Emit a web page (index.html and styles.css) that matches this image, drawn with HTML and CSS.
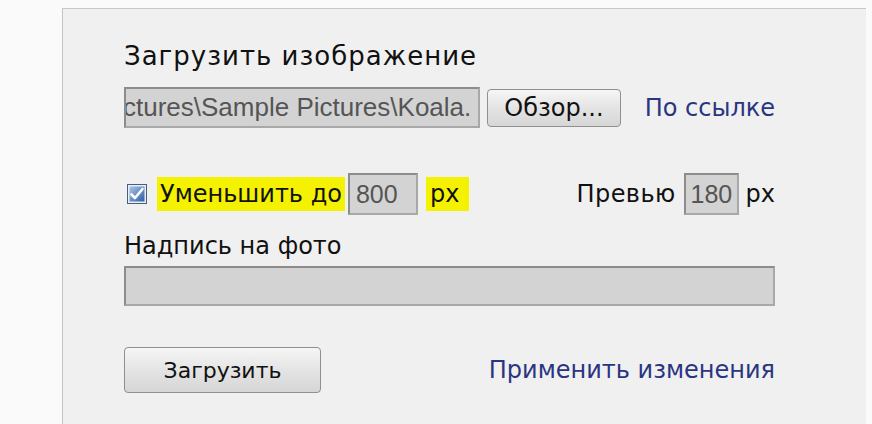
FILE: index.html
```html
<!DOCTYPE html>
<html lang="ru">
<head>
    <meta charset="UTF-8">
    <title>Загрузить изображение</title>
    <link rel="stylesheet" href="styles.css">
</head>
<body>
<div class="panel">
    <div class="title">Загрузить изображение</div>

    <div class="row file-row">
        <div class="field file-path"><span>ctures\Sample Pictures\Koala.</span></div>
        <button class="btn browse" type="button">Обзор...</button>
        <a class="link" href="#">По ссылке</a>
    </div>

    <div class="row size-row">
        <div class="resize">
            <svg class="check" width="20" height="20" viewBox="0 0 20 20">
                <defs>
                    <linearGradient id="cb" x1="0" y1="0" x2="1" y2="1">
                        <stop offset="0" stop-color="#a9c4ea"/>
                        <stop offset="1" stop-color="#2f5fa6"/>
                    </linearGradient>
                </defs>
                <rect x="0.5" y="0.5" width="19" height="19" fill="#e8eef6" stroke="#4a5e7c"/>
                <rect x="2.5" y="2.5" width="15" height="15" fill="url(#cb)"/>
                <path d="M4.5 10.5 L8 14 L15.5 5" fill="none" stroke="#fff" stroke-width="2.6" stroke-linecap="round" stroke-linejoin="round"/>
            </svg>
            <span class="mark">Уменьшить до</span>
            <div class="field num wide">800</div>
            <span class="mark unit">px</span>
        </div>
        <div class="preview">
            <span>Превью</span>
            <div class="field num">180</div>
            <span>px</span>
        </div>
    </div>

    <div class="caption">Надпись на фото</div>
    <div class="field text-line"></div>

    <div class="row bottom-row">
        <button class="btn upload" type="button">Загрузить</button>
        <a class="link apply" href="#">Применить изменения</a>
    </div>
</div>
</body>
</html>
```

FILE: styles.css
```css
body {
    margin: 0;
    padding: 0;
    background: #fafafa;
    font-family: "DejaVu Sans", Verdana, sans-serif;
    color: #111;
}

.panel {
    margin: 8px 6px 0 62px;
    height: 416px;
    box-sizing: border-box;
    padding: 32px 0 0 61px;
    background: #f0f0f0;
    border-top: 1px solid #c9c9c9;
    border-left: 1px solid #c4c4c4;
}

.title {
    font-size: 26px;
    line-height: 30px;
    letter-spacing: 1px;
}

.row {
    display: flex;
    align-items: center;
    width: 651px;
}

.field {
    box-sizing: border-box;
    background: #d3d3d3;
    border: 2px solid #8c8c8c;
    border-right-color: #a8a8a8;
    border-bottom-color: #a8a8a8;
    color: #555;
}

.file-row {
    margin-top: 16px;
    height: 41px;
}

.file-path {
    width: 356px;
    height: 41px;
    overflow: hidden;
    white-space: nowrap;
    display: flex;
    align-items: center;
    font-family: "Liberation Sans", Arial, sans-serif;
    font-size: 26px;
}

.file-path span {
    margin-left: -3px;
}

.btn {
    box-sizing: border-box;
    border: 1px solid #8f8f8f;
    border-radius: 4px;
    background: linear-gradient(#f6f6f6, #e4e4e4 50%, #d6d6d6);
    color: #111;
    font-family: "DejaVu Sans", Verdana, sans-serif;
    padding: 0;
}

.browse {
    width: 134px;
    height: 38px;
    margin-left: 7px;
    font-size: 24px;
}

.link {
    color: #2a3582;
    text-decoration: none;
    font-size: 24px;
    margin-left: auto;
}

.size-row {
    margin-top: 45px;
    height: 42px;
    justify-content: space-between;
}

.resize,
.preview {
    display: flex;
    align-items: center;
    font-size: 24px;
}

.preview span:first-child {
    letter-spacing: 0.4px;
}

.check {
    margin: 0 10px 0 3px;
}

.mark {
    background: #f4f200;
    line-height: 34px;
    padding: 0 3px;
}

.mark.unit {
    padding: 0 10px 0 4px;
}

.num {
    height: 42px;
    display: flex;
    align-items: center;
    font-family: "Liberation Sans", Arial, sans-serif;
    font-size: 25px;
    padding-left: 5px;
    width: 55px;
}

.num.wide {
    width: 70px;
    margin: 0 8px 0 3px;
    padding-left: 6px;
}

.preview .num {
    margin: 0 7px 0 8px;
}

.caption {
    margin-top: 17px;
    font-size: 24px;
    line-height: 28px;
}

.text-line {
    margin-top: 6px;
    width: 651px;
    height: 40px;
}

.bottom-row {
    margin-top: 41px;
    height: 46px;
}

.upload {
    width: 197px;
    height: 46px;
    font-size: 22px;
}

.apply {
    font-size: 24px;
}
```
